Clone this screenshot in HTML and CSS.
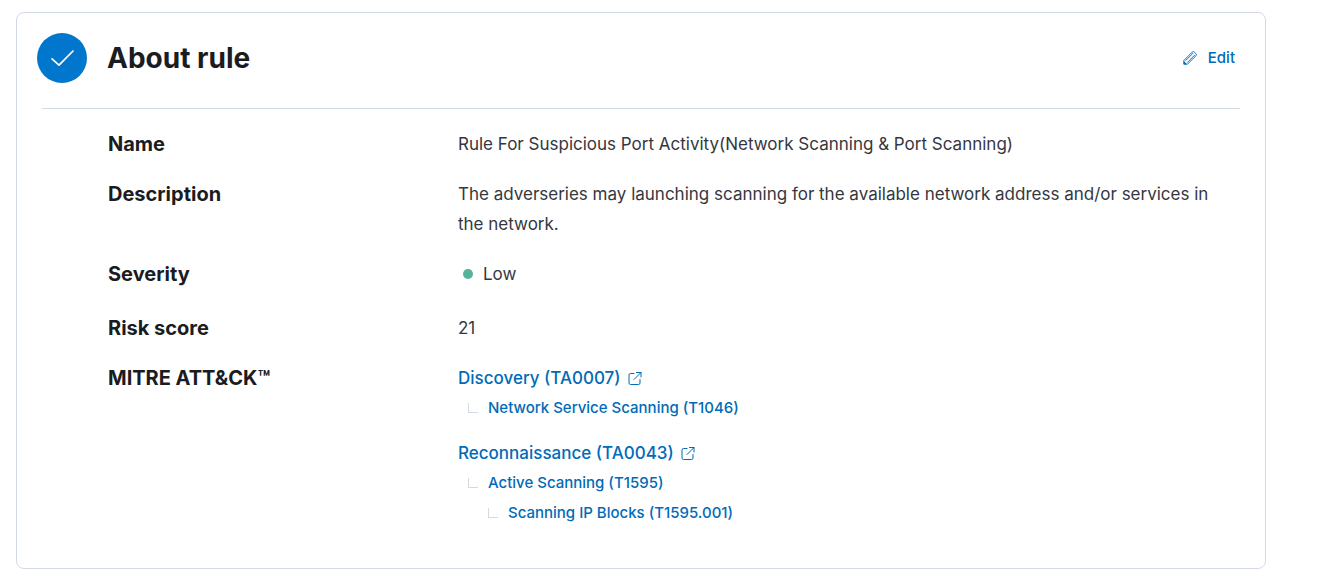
FILE: index.html
```
<!DOCTYPE html>
<html lang="en">
<head>
<meta charset="utf-8">
<meta name="viewport" content="width=device-width, initial-scale=1">
<title>About rule</title>
<link rel="stylesheet" href="styles.css">
</head>
<body>
<main class="panel">
  <header class="panel-header">
    <span class="step-status">
      <svg width="24" height="18" viewBox="0 0 24 18" aria-hidden="true"><path d="M2 9.800l7 6.400L23 2" fill="none" stroke="#fff" stroke-width="1.700" stroke-linecap="round" stroke-linejoin="round"/></svg>
    </span>
    <h1 class="title">About rule</h1>
    <button class="edit" type="button">
      <svg width="14" height="14" viewBox="0 0 14 14" aria-hidden="true"><path d="M.8 13.200V9.500L9.300 1a1.300 1.300 0 0 1 1.900 0l1.800 1.800a1.300 1.300 0 0 1 0 1.900L4.500 13.200zM2.400 9.800l7.700-7.700M4.200 11.600l7.700-7.700" fill="none" stroke="currentColor" stroke-width="0.900" stroke-linejoin="round"/><path d="M.8 10v3.200H4z" fill="currentColor"/></svg>
      <span>Edit</span>
    </button>
  </header>
  <dl class="details">
    <dt>Name</dt>
    <dd>Rule For Suspicious Port Activity(Network Scanning &amp; Port Scanning)</dd>
    <dt>Description</dt>
    <dd>The adverseries may launching scanning for the available network address and/or services in the network.</dd>
    <dt>Severity</dt>
    <dd class="severity"><span class="dot"></span>Low</dd>
    <dt>Risk score</dt>
    <dd>21</dd>
    <dt>MITRE ATT&amp;CK™</dt>
    <dd class="threats">
      <div class="threat">
        <a class="tactic" href="#">Discovery (TA0007)<svg class="external" width="14" height="14" viewBox="0 0 14 14" aria-hidden="true"><path d="M6 2.500H2.500A1.500 1.500 0 0 0 1 4v8a1.500 1.500 0 0 0 1.500 1.500h8A1.500 1.500 0 0 0 12 12V8.500M8.500 1.500H13V6M13 1.500L6 8.500" fill="none" stroke="currentColor" stroke-width="1" stroke-linecap="round"/></svg></a>
        <a class="technique" href="#"><span class="branch"></span>Network Service Scanning (T1046)</a>
      </div>
      <div class="threat">
        <a class="tactic" href="#">Reconnaissance (TA0043)<svg class="external" width="14" height="14" viewBox="0 0 14 14" aria-hidden="true"><path d="M6 2.500H2.500A1.500 1.500 0 0 0 1 4v8a1.500 1.500 0 0 0 1.500 1.500h8A1.500 1.500 0 0 0 12 12V8.500M8.500 1.500H13V6M13 1.500L6 8.500" fill="none" stroke="currentColor" stroke-width="1" stroke-linecap="round"/></svg></a>
        <a class="technique" href="#"><span class="branch"></span>Active Scanning (T1595)</a>
        <a class="technique subtechnique" href="#"><span class="branch"></span>Scanning IP Blocks (T1595.001)</a>
      </div>
    </dd>
  </dl>
</main>
</body>
</html>
```
FILE: styles.css
```
* { box-sizing: border-box; }
body {
  margin: 0;
  padding: 12px 57px 8px 16px;
  background: #fff;
  color: #343741;
  font-family: Inter, "Liberation Sans", sans-serif;
  font-size: 18px;
  line-height: 30px;
}
.panel {
  border: 1px solid #d3dae6;
  border-radius: 8px;
  padding: 20px 25px 40px;
}
.panel-header {
  display: flex;
  align-items: center;
  gap: 20px;
  margin: 0;
  padding: 0 5px 25px 0;
  border-bottom: 1px solid #d3dae6;
}
.step-status {
  display: flex;
  align-items: center;
  justify-content: center;
  width: 50px;
  height: 50px;
  margin-left: -5px;
  border-radius: 50%;
  background: #0077cc;
}
.title {
  flex: 1;
  margin: 0;
  color: #1a1c21;
  font-size: 28px;
  font-weight: 700;
  line-height: 40px;
}
.edit {
  display: flex;
  align-items: center;
  gap: 11px;
  padding: 0;
  border: 0;
  background: none;
  color: #006bb8;
  font: 500 15px/20px Inter, "Liberation Sans", sans-serif;
  cursor: pointer;
}
.details {
  display: grid;
  grid-template-columns: 330px 1fr;
  gap: 20px;
  margin: 0;
  padding: 20px 0 0 66px;
}
dt {
  color: #1a1c21;
  font-size: 20px;
  font-weight: 700;
}
dd {
  margin: 0;
  padding-right: 5px;
  font-size: 17px;
}
.severity {
  display: flex;
  align-items: center;
  gap: 10px;
  padding: 0 5px;
  margin-bottom: 4px;
}
.dot {
  width: 10px;
  height: 10px;
  border-radius: 50%;
  background: #54b399;
}
.threats {
  display: grid;
  gap: 15px;
  font-size: 18px;
}
a {
  color: #006bb8;
  font-weight: 500;
  text-decoration: none;
}
.threat {
  display: flex;
  flex-direction: column;
  align-items: flex-start;
}
.tactic {
  display: flex;
  align-items: center;
  gap: 7px;
  font-size: 17px;
}
.technique {
  display: flex;
  align-items: center;
  gap: 10px;
  padding-left: 10px;
  font-size: 15px;
}
.subtechnique { padding-left: 30px; }
.branch {
  width: 10px;
  height: 10px;
  border: solid #d3dae6;
  border-width: 0 0 1px 1px;
}
```
